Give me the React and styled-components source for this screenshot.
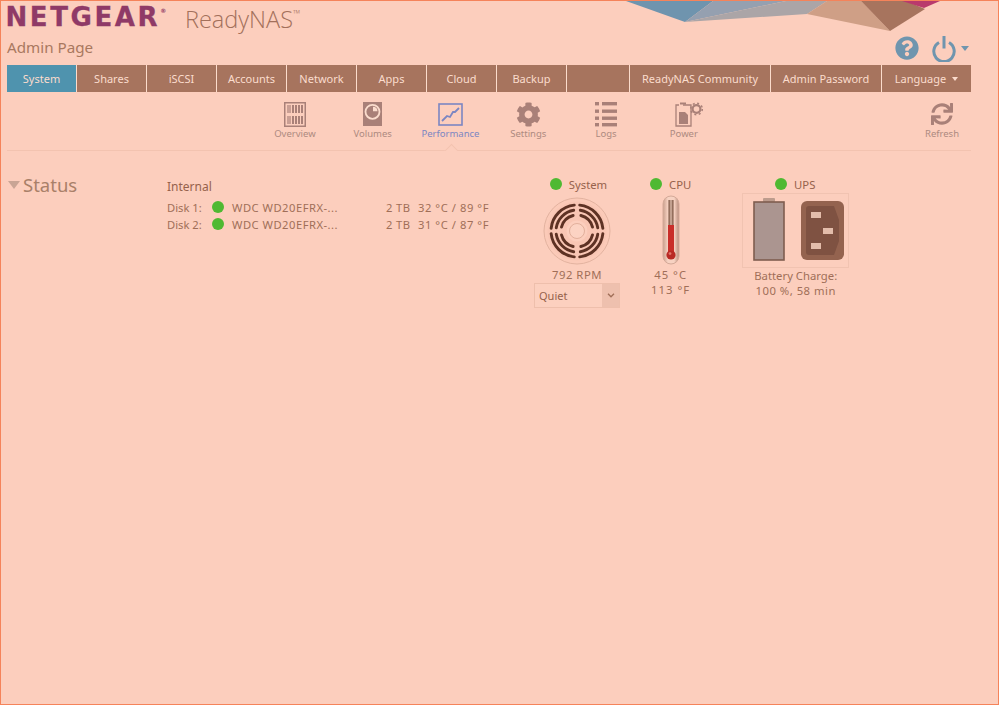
import React from 'react';
import styled, { createGlobalStyle } from 'styled-components';
import { FaCog, FaQuestionCircle, FaSync } from 'react-icons/fa';

const GlobalStyle = createGlobalStyle`
  html, body {
    margin: 0;
    padding: 0;
    background: #fccebd;
  }
  * {
    box-sizing: border-box;
  }
`;

const Page = styled.div`
  position: relative;
  width: 999px;
  height: 705px;
  overflow: hidden;
  padding: 0 6px;
  background: #fccebd;
  border: 1px solid #f5835a;
  font-family: "Noto Sans", "Open Sans", sans-serif;
  color: #a5745f;
`;

const Banner = styled.svg`
  position: absolute;
  top: 0;
  left: 620px;
`;

const Header = styled.header`
  display: flex;
  justify-content: space-between;
  height: 64px;
`;

const Brand = styled.div`
  display: flex;
  flex-direction: column;
`;

const LogoRow = styled.div`
  display: flex;
  align-items: flex-start;
  height: 36px;
  padding-top: 1px;
`;

const Logo = styled.div`
  display: flex;
  width: 178px;
  margin-left: -1.5px;
  padding-right: 0;
  font-family: "DejaVu Sans", "Liberation Sans", sans-serif;
  font-weight: 700;
  font-size: 26px;
  line-height: 30px;
  letter-spacing: 2.6px;
  -webkit-text-stroke: 0.3px #8f3a67;
  color: #8f3a67;
`;

const LogoMark = styled.span`
  font-size: 6px;
  line-height: 18px;
  letter-spacing: 0;
  -webkit-text-stroke: 0;
`;

const Product = styled.div`
  margin-left: 1.5px;
  font-family: "Open Sans", sans-serif;
  font-weight: 300;
  font-size: 23.5px;
  line-height: 34px;
  color: #a3705b;

  sup {
    font-size: 10px;
    line-height: 0;
    vertical-align: 11px;
  }
`;

const PageName = styled.div`
  font-size: 15.2px;
  line-height: 20px;
  color: #a9785f;
`;

const Tools = styled.div`
  display: flex;
  align-items: center;
  gap: 13px;
  height: 24px;
  margin-top: 35px;
  margin-right: 23px;
  color: #6f95ae;
`;

const Caret = styled.span`
  width: 0;
  height: 0;
  margin-left: ${(props) => props.offset || 0}px;
  border-left: ${(props) => props.size || 4}px solid transparent;
  border-right: ${(props) => props.size || 4}px solid transparent;
  border-top: ${(props) => (props.size || 4) + 1}px solid ${(props) => props.color || '#6f95ae'};
`;

const TopNav = styled.nav`
  display: flex;
  width: 964px;
  height: 27px;
`;

const Tab = styled.div`
  flex: 0 0 ${(props) => props.width || 70}px;
  display: flex;
  align-items: center;
  justify-content: center;
  gap: 6px;
  border-right: 1px solid #fcdccc;
  background: ${(props) => (props.active ? '#4f93ae' : '#a7745e')};
  font-size: 11px;
  color: #fbdccd;

  &:last-child {
    border-right: none;
  }
`;

const SubNav = styled.div`
  display: flex;
  width: 964px;
  height: 59px;
  padding: 9px 0 0 249px;
  border-bottom: 1px solid #f3c3b0;
`;

const SubItem = styled.div`
  position: relative;
  flex: 0 0 77.8px;
  display: flex;
  flex-direction: column;
  align-items: center;
  color: ${(props) => (props.active ? '#7b86c2' : '#ad8a80')};
  font-size: 9.5px;

  &.refresh {
    flex-basis: 58px;
    margin-left: auto;
  }
`;

const SubIcon = styled.div`
  height: 26px;
  display: flex;
  align-items: center;
  justify-content: center;
  color: #a98078;
`;

const SubLabel = styled.span`
  line-height: 14px;
`;

const Pointer = styled.span`
  position: absolute;
  left: 32px;
  bottom: -1px;
  width: 14px;
  height: 8px;
  overflow: hidden;

  &::after {
    content: '';
    position: absolute;
    left: 2px;
    top: 3px;
    width: 10px;
    height: 10px;
    background: #fccebd;
    border-left: 1px solid #f3c3b0;
    border-top: 1px solid #f3c3b0;
    transform: rotate(45deg);
  }
`;

const Section = styled.section`
  display: flex;
  padding-top: 24px;
`;

const SectionTitle = styled.div`
  flex: 0 0 160px;
  display: flex;
  align-items: flex-start;
  gap: 3px;
  height: 24px;
  margin-top: -2px;
  font-size: 18.5px;
  line-height: 24px;
  color: #a98069;
`;

const Collapse = styled.span`
  width: 0;
  height: 0;
  margin-top: 8px;
  margin-left: 1px;
  border-left: 6px solid transparent;
  border-right: 6px solid transparent;
  border-top: 8px solid #c9a595;
`;

const Internal = styled.div`
  flex: 0 0 367px;
  padding-top: 3px;
`;

const InternalTitle = styled.div`
  font-size: 12px;
  line-height: 18px;
  margin-bottom: 3px;
  color: #96624c;
`;

const DiskRow = styled.div`
  display: flex;
  align-items: center;
  height: 17px;
  font-size: 11.2px;
  color: #a06e58;
`;

const DiskName = styled.span`
  flex: 0 0 45px;
`;

const DiskModel = styled.span`
  flex: 0 0 154px;
  margin-left: 8px;
  letter-spacing: 0.5px;
`;

const DiskSize = styled.span`
  flex: 0 0 32px;
  letter-spacing: 0.4px;
`;

const DiskTemp = styled.span`
  white-space: nowrap;
  letter-spacing: 0.55px;
`;

const Dot = styled.span`
  flex: 0 0 12px;
  width: 12px;
  height: 12px;
  margin-top: ${(props) => props.lift || 0}px;
  border-radius: 50%;
  background: #4fb932;
`;

const Gauge = styled.div`
  display: flex;
  flex-direction: column;
  align-items: center;
  flex: 0 0 ${(props) => props.width}px;
  margin-left: ${(props) => props.offset || 0}px;
  font-size: 11.3px;
  color: #a06e58;
`;

const GaugeHead = styled.div`
  display: flex;
  align-items: center;
  justify-content: center;
  gap: 7px;
  height: 16px;
  margin-top: 1px;
  margin-left: ${(props) => props.shift || 0}px;
  color: #96624c;
`;

const Reading = styled.div`
  line-height: 15px;
  letter-spacing: ${(props) => (props.spacing === undefined ? 0.5 : props.spacing)}px;
  text-align: center;
  white-space: nowrap;
`;

const FanWrap = styled.div`
  height: 72px;
  margin-top: 3px;
  margin-bottom: 0;
`;

const Select = styled.div`
  display: flex;
  width: 86px;
  height: 25px;
  margin-top: 1px;
  border: 1px solid #eebfac;
  background: #fcd0bf;
  font-size: 11px;
  color: #96624c;
`;

const SelectValue = styled.span`
  flex: 1;
  padding-left: 4px;
  line-height: 24px;
`;

const SelectArrow = styled.span`
  flex: 0 0 17px;
  display: flex;
  align-items: center;
  justify-content: center;
  background: #eec0ae;
`;

const ThermoWrap = styled.div`
  height: 72px;
  margin-top: 3px;
`;

const UpsBox = styled.div`
  display: flex;
  gap: 16px;
  width: 107px;
  height: 75px;
  margin-top: 1px;
  padding: 4px 0 0 10px;
  border: 1px solid #f1c3b1;
`;

const PowerIcon = styled.svg`
  margin-left: 10px;
`;

const Overview = () => (
  <svg width="22" height="25" viewBox="0 0 22 25">
    <rect x="0.75" y="0.75" width="20.5" height="23.5" fill="none" stroke="#a98078" strokeWidth="1.5" />
    <rect x="3" y="3" width="4" height="8" fill="#a98078" opacity="0.6" />
    <rect x="3" y="14" width="4" height="8" fill="#a98078" opacity="0.6" />
    {[8, 11, 14, 17].map((x) => (
      <g key={x}>
        <rect x={x} y="3" width="2" height="8" fill="#a98078" />
        <rect x={x} y="14" width="2" height="8" fill="#a98078" />
      </g>
    ))}
  </svg>
);

const Volumes = () => (
  <svg width="19" height="25" viewBox="0 0 19 25">
    <rect width="19" height="24" fill="#a98078" />
    <circle cx="9.5" cy="9.8" r="7" fill="none" stroke="#fbdccd" strokeWidth="1.8" />
    <path d="M10 9.3 V4.8 A4.7 4.7 0 0 1 14.5 9.3 Z" fill="#fbdccd" />
  </svg>
);

const Performance = () => (
  <svg width="25" height="23" viewBox="0 0 25 23">
    <rect x="1" y="1" width="23" height="21" fill="none" stroke="#7b86c2" strokeWidth="1.6" />
    <path d="M4 18 L9 13 L12 14 L15 9 L17 9 L21 5" fill="none" stroke="#7b86c2" strokeWidth="1.8" />
  </svg>
);

const Logs = () => (
  <svg width="22" height="25" viewBox="0 0 22 25" fill="#a98078">
    {[0, 7.5, 14.5, 21].map((y) => (
      <g key={y}>
        <rect x="0" y={y} width="4" height="3.4" />
        <rect x="7" y={y} width="15" height="3.4" />
      </g>
    ))}
  </svg>
);

const Power = () => (
  <PowerIcon width="28" height="25" viewBox="0 0 28 25">
    <path d="M8 3 H16 V24 H1 V3 H4" fill="none" stroke="#a98078" strokeWidth="1.3" />
    <rect x="5" y="0.5" width="6" height="2" fill="#a98078" />
    <path d="M4 10 H10 L13 13 V22 H4 Z" fill="#a98078" />
    <circle cx="21.5" cy="7" r="3.9" fill="none" stroke="#a98078" strokeWidth="2.2" />
    <circle cx="21.5" cy="7" r="5.8" fill="none" stroke="#a98078" strokeWidth="1.5" strokeDasharray="2 2.55" />
  </PowerIcon>
);

const polar = (r, deg) => {
  const a = (deg * Math.PI) / 180;
  return [36 + r * Math.cos(a), 36 + r * Math.sin(a)];
};

const arc = (r, from, to) => {
  const [x1, y1] = polar(r, from);
  const [x2, y2] = polar(r, to);
  return `M${x1} ${y1} A${r} ${r} 0 0 1 ${x2} ${y2}`;
};

const fanArcs = [
  [26, 6],
  [21, 9],
  [16, 14],
];

const Fan = () => (
  <svg width="72" height="72" viewBox="0 0 72 72">
    <circle cx="36" cy="36" r="33" fill="#fbcab8" stroke="#e3b3a0" strokeWidth="1" />
    <circle cx="36" cy="36" r="29.5" fill="#f9c6b4" />
    {[0, 90, 180, 270].map((q) =>
      fanArcs.map(([r, gap]) => (
        <path
          key={`${q}-${r}`}
          d={arc(r, q + gap, q + 90 - gap)}
          fill="none"
          stroke="#5e3224"
          strokeWidth="2.9"
          strokeLinecap="round"
        />
      ))
    )}
    <circle cx="36" cy="36" r="10.5" fill="#fccebd" />
    <circle cx="36" cy="36" r="7.5" fill="#fcd3c3" stroke="#e2b09c" strokeWidth="1" />
  </svg>
);

const Thermometer = () => (
  <svg width="18" height="72" viewBox="0 0 18 72">
    <defs>
      <linearGradient id="glass" x1="0" x2="1" y1="0" y2="0">
        <stop offset="0" stopColor="#c99f8d" />
        <stop offset="0.3" stopColor="#f7d2c2" />
        <stop offset="0.7" stopColor="#f7d2c2" />
        <stop offset="1" stopColor="#b88d7c" />
      </linearGradient>
    </defs>
    <rect x="1" y="1" width="16" height="68" rx="8" fill="url(#glass)" stroke="#d4a998" />
    <rect x="6.5" y="5" width="5" height="26" fill="#c2a08f" />
    <rect x="6.5" y="5" width="1.4" height="26" fill="#8f6a58" />
    <rect x="10.1" y="5" width="1.4" height="26" fill="#8f6a58" />
    <rect x="6" y="30" width="6" height="30" fill="#c92f2a" />
    <circle cx="9" cy="60" r="4.6" fill="#b92a25" />
    <circle cx="8" cy="58.6" r="1.4" fill="#e2756b" />
  </svg>
);

const Battery = () => (
  <svg width="32" height="63" viewBox="0 0 32 63">
    <rect x="10" y="0" width="12" height="4" rx="1" fill="#bd9c8d" />
    <rect x="1" y="4" width="30" height="58" fill="#ab9590" stroke="#7f5d4f" strokeWidth="1.6" />
  </svg>
);

const Plug = () => (
  <svg width="43" height="63" viewBox="0 0 43 63">
    <g transform="translate(0 3)">
      <rect width="43" height="59" rx="6" fill="#94634f" />
      <path d="M5 8 Q5 5 8 5 H33 L38 19 V40 L33 54 H8 Q5 54 5 51 Z" fill="#7f5242" />
      <rect x="10" y="11" width="10" height="6" fill="#e3bdab" />
      <rect x="22" y="27" width="10" height="6" fill="#e3bdab" />
      <rect x="10" y="42" width="10" height="6" fill="#e3bdab" />
    </g>
  </svg>
);

const Chevron = () => (
  <svg width="8" height="5" viewBox="0 0 8 5">
    <path d="M1 0.8 L4 3.8 L7 0.8" fill="none" stroke="#a06e58" strokeWidth="1.3" />
  </svg>
);

const PowerGlyph = () => (
  <svg width="24" height="27" viewBox="0 0 24 27" fill="none" stroke="#6f95ae" strokeWidth="3" strokeLinecap="butt">
    <path d="M7 7.5 A10.2 10.2 0 1 0 17 7.5" />
    <path d="M12 1 V13.5" />
  </svg>
);

const tabs = ['Shares', 'iSCSI', 'Accounts', 'Network', 'Apps', 'Cloud', 'Backup'];

const subItems = [
  { label: 'Overview', icon: <Overview /> },
  { label: 'Volumes', icon: <Volumes /> },
  { label: 'Performance', icon: <Performance />, active: true },
  { label: 'Settings', icon: <FaCog size={25} /> },
  { label: 'Logs', icon: <Logs /> },
  { label: 'Power', icon: <Power /> },
];

const disks = [
  { name: 'Disk 1:', temp: '32 °C / 89 °F' },
  { name: 'Disk 2:', temp: '31 °C / 87 °F' },
];

const App = () => {
  return (
    <Page>
      <GlobalStyle />
      <Banner width="330" height="31" viewBox="620 0 330 31">
        <polygon points="625,0 684,21 712,0" fill="#6f94ae" />
        <polygon points="712,0 684,21 785,0" fill="#95a0b0" />
        <polygon points="785,0 684,21 806,13 826,0" fill="#aba5a7" />
        <polygon points="826,0 806,13 889,30 860,0" fill="#cf9f86" />
        <polygon points="860,0 889,30 924,8 905,0" fill="#a7745e" />
        <polygon points="901,0 923,7 939,0" fill="#b93a6c" />
      </Banner>
      <Header>
        <Brand>
          <LogoRow>
            <Logo>NETGEAR<LogoMark>®</LogoMark></Logo>
            <Product>ReadyNAS<sup>™</sup></Product>
          </LogoRow>
          <PageName>Admin Page</PageName>
        </Brand>
        <Tools>
          <FaQuestionCircle size={24} />
          <PowerGlyph />
          <Caret offset={-8} />
        </Tools>
      </Header>
      <TopNav>
        <Tab active>System</Tab>
        {tabs.map((tab) => (
          <Tab key={tab}>{tab}</Tab>
        ))}
        <Tab width={63} />
        <Tab width={141}>ReadyNAS Community</Tab>
        <Tab width={111}>Admin Password</Tab>
        <Tab width={89}>
          Language <Caret color="#fbdccd" size={3.5} />
        </Tab>
      </TopNav>
      <SubNav>
        {subItems.map((item) => (
          <SubItem key={item.label} active={item.active}>
            <SubIcon>{item.icon}</SubIcon>
            <SubLabel>{item.label}</SubLabel>
            {item.active && <Pointer />}
          </SubItem>
        ))}
        <SubItem className="refresh">
          <SubIcon><FaSync size={22} /></SubIcon>
          <SubLabel>Refresh</SubLabel>
        </SubItem>
      </SubNav>
      <Section>
        <SectionTitle>
          <Collapse />
          Status
        </SectionTitle>
        <Internal>
          <InternalTitle>Internal</InternalTitle>
          {disks.map((disk) => (
            <DiskRow key={disk.name}>
              <DiskName>{disk.name}</DiskName>
              <Dot lift={-2} />
              <DiskModel>WDC WD20EFRX-...</DiskModel>
              <DiskSize>2 TB</DiskSize>
              <DiskTemp>{disk.temp}</DiskTemp>
            </DiskRow>
          ))}
        </Internal>
        <Gauge width={86}>
          <GaugeHead shift={3}><Dot />System</GaugeHead>
          <FanWrap><Fan /></FanWrap>
          <Reading>792 RPM</Reading>
          <Select>
            <SelectValue>Quiet</SelectValue>
            <SelectArrow><Chevron /></SelectArrow>
          </Select>
        </Gauge>
        <Gauge width={40} offset={30}>
          <GaugeHead><Dot />CPU</GaugeHead>
          <ThermoWrap><Thermometer /></ThermoWrap>
          <Reading spacing={1}>45 °C</Reading>
          <Reading spacing={1}>113 °F</Reading>
        </Gauge>
        <Gauge width={107} offset={51}>
          <GaugeHead shift={-1}><Dot />UPS</GaugeHead>
          <UpsBox>
            <Battery />
            <Plug />
          </UpsBox>
          <Reading spacing={0}>Battery Charge:</Reading>
          <Reading>100 %, 58 min</Reading>
        </Gauge>
      </Section>
    </Page>
  );
};

export default App;
